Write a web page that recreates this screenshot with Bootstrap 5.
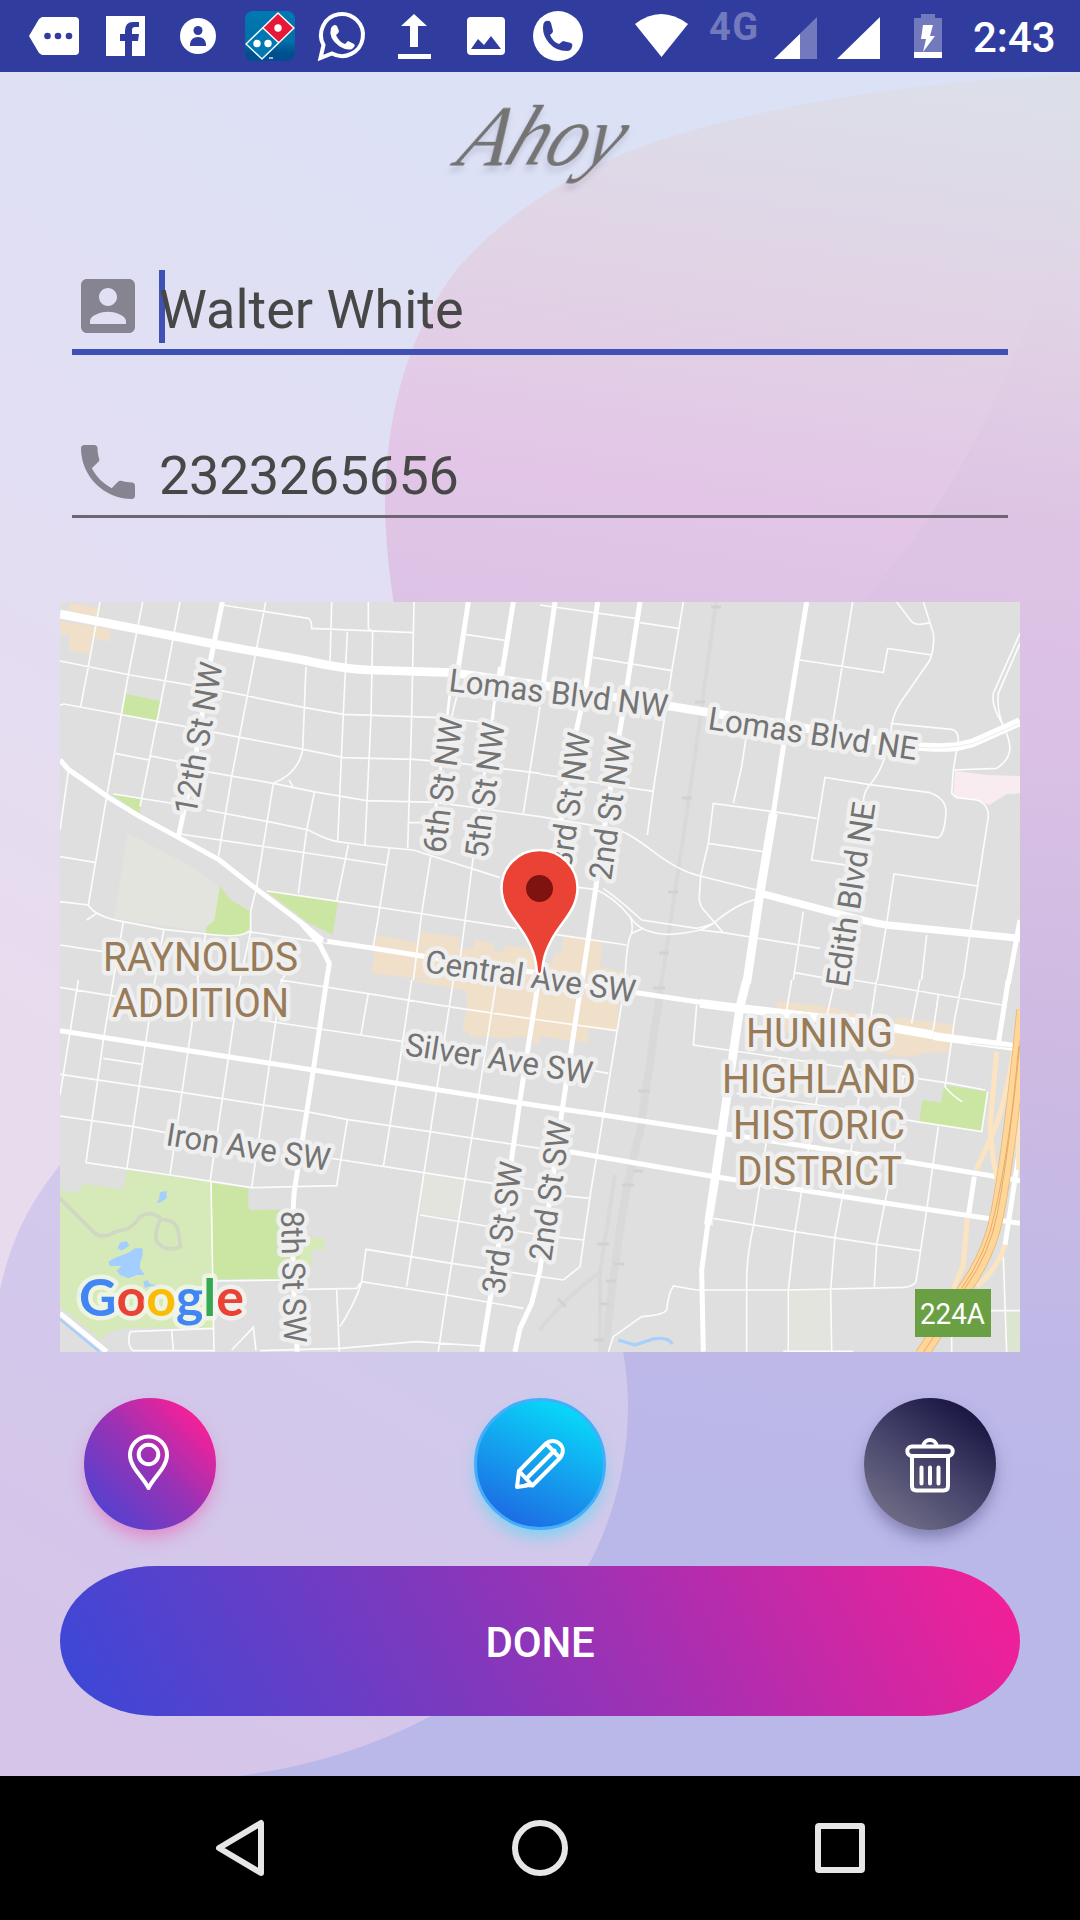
<!DOCTYPE html>
<html lang="en">
<head>
<meta charset="utf-8">
<meta name="viewport" content="width=device-width, initial-scale=1">
<title>Ahoy</title>
<link href="https://cdn.jsdelivr.net/npm/bootstrap@5.3.0/dist/css/bootstrap.min.css" rel="stylesheet">
<style>
body{font-family:Roboto,"Noto Sans",sans-serif;width:1080px;height:1920px;overflow:hidden}
svg{display:block;flex:none}
.statusbar{height:72px;background:#303d9f;padding-left:18px;color:#fff}
.wifi-icon{margin-left:41px}
.net{width:52px;margin-left:20px;font-size:38px;line-height:1;font-weight:700;letter-spacing:1.500px;color:#7279bd;padding-top:8px;white-space:nowrap}
.sim-one{margin-left:13px}
.sim-two{margin-left:19px}
.battery-icon{margin-left:33px}
.clock{margin-left:29px;font-size:42px;font-weight:500;line-height:72px;padding-top:2px;white-space:nowrap}
.screen{height:1704px}
.backdrop{z-index:0}
.content{z-index:1;padding:0 60px}
.brand{height:178px}
.brand svg{overflow:visible}
.brand text{font-family:"Liberation Serif",serif;font-style:italic;font-size:86px;fill:#747474;filter:drop-shadow(1px 6px 3px rgba(80,80,110,.2))}
.field{margin:0 12px;color:#474747;font-size:54px;line-height:73px;height:105px}
.field svg{margin-top:20px;color:#878492}
.field-name{border-bottom:6px solid #3f51b5}
.field-phone{border-bottom:3px solid #6d6672;margin-top:58px}
.field-phone svg{margin-top:23px}
.field-value{margin-left:15px;padding-top:23px;white-space:nowrap}
.field-name .field-value{position:relative}
.field-phone .field-value{padding-top:26px;letter-spacing:-.4px}
.caret{position:absolute;left:0;top:20px;width:6px;height:73px;background:#3f51b5;z-index:-1}
.mapbox{margin-top:84px;height:750px}
.actions{margin-top:46px;padding:0 24px;height:132px}
.round{width:132px;height:132px;padding:0;border:0}
.round svg{fill:none;stroke:#fff;stroke-width:4;stroke-linecap:round;stroke-linejoin:round}
.r-pin{background:linear-gradient(225deg,#fb1f96 12%,#9733b6 50%,#4b43d2 92%);box-shadow:0 9px 16px -2px rgba(240,80,170,.5)}
.r-edit{background:linear-gradient(205deg,#05e1fb 6%,#14a4ef 48%,#1e62e2 96%);border:3px solid #45adfa;box-shadow:0 9px 16px -2px rgba(70,215,245,.6)}
.r-edit svg{margin:-3px}
.r-del{background:linear-gradient(215deg,#15133f 10%,#45436a 50%,#737187 92%);box-shadow:0 9px 16px -2px rgba(70,65,120,.5)}
.done{margin-top:36px;height:150px;border-radius:96px/75px;border:0;background:linear-gradient(62deg,#3e47d6 3%,#7d39be 40%,#b22dae 67%,#d426a2 83%,#f41f97 99%);color:#fff;font-size:42px;font-weight:500;letter-spacing:-.2px;padding-top:9px}
.navkeys{height:144px;background:#000;padding-left:90px;padding-right:90px}
.navkeys svg{fill:none;stroke:#e6e6e6;stroke-width:6;stroke-linejoin:round}
.minor path{fill:none;stroke:#fff;stroke-width:5;stroke-opacity:.9}
.major path{fill:none;stroke:#fff;stroke-width:15;stroke-linejoin:round}
.streets text{font-size:32px;fill:#747474;stroke:#efefef;stroke-width:9;stroke-linejoin:round;paint-order:stroke}
.areas text{font-size:41px;fill:#987b58;stroke:#efefef;stroke-width:9;stroke-linejoin:round;paint-order:stroke}
.attribution{font-family:Lato,sans-serif;font-size:52px;paint-order:stroke;stroke:rgba(245,247,240,.75);stroke-width:9;stroke-linejoin:round}
</style>
<script src="https://cdn.jsdelivr.net/npm/bootstrap@5.3.0/dist/js/bootstrap.bundle.min.js"></script>
</head>
<body>
<header class="statusbar d-flex align-items-start">
  <svg width="72" height="72"><path d="M24 17h33q4 0 4 4v30q0 4-4 4H24l-3-2-10-17 10-17z" fill="#fff"/><g fill="#303d9f"><circle cx="29.500" cy="36" r="3.300"/><circle cx="40" cy="36" r="3.300"/><circle cx="51" cy="36" r="3.300"/></g></svg>
  <svg width="72" height="72"><path fill="#fff" d="M16 16h39v40H42V41h6l1-7h-7v-4q0-3 3-3h4v-5h-6q-8 0-8 9v3h-5v7h5v15H16z"/></svg>
  <svg width="72" height="72"><circle cx="36" cy="36" r="18" fill="#fff"/><circle cx="36" cy="30.500" r="4.500" fill="#303d9f"/><path d="M28 46v-2q1-7 8-7t8 7v2z" fill="#303d9f"/></svg>
  <svg width="72" height="72"><defs><linearGradient id="dom" x2="0" y2="1"><stop stop-color="#0079b2"/><stop offset=".6" stop-color="#0070a8"/><stop offset=".85" stop-color="#004e8e"/></linearGradient></defs><rect x="11" y="11" width="50" height="50" rx="8" fill="url(#dom)"/><path d="M44 13l16 15-32 31-16-15z" fill="#0079b2"/><path d="M44 13l16 15-15 15-16-15z" fill="#e51937"/><path d="M44 13l16 15-32 31-16-15zM29 28l16 15" fill="none" stroke="#fff" stroke-width="1.400" stroke-linejoin="round"/><g fill="#fff"><circle cx="44" cy="28" r="3.700"/><circle cx="23" cy="43.500" r="3.700"/><circle cx="34" cy="43.500" r="3.700"/></g><path d="M35 58h4" stroke="#cde" stroke-width="1.500"/></svg>
  <svg width="72" height="72"><path d="M14.500 58l3-13A21 21 0 1 1 26 53.500z" fill="none" stroke="#fff" stroke-width="4"/><path d="M25 28q3-5 6-2l2 5q0 2-3 4 3 7 9 9l3-3 6 3q2 2-2 5-5 2-13-3-11-8-8-18z" fill="#fff"/></svg>
  <svg width="72" height="72"><path d="M36 14l13 12h-9v21h-8V26h-9zM20 54h33v5H20z" fill="#fff"/></svg>
  <svg width="72" height="72"><rect x="17" y="17" width="38" height="38" rx="4" fill="#fff"/><path d="M21 49l7-10 6 6 7-9 10 13z" fill="#303d9f"/></svg>
  <svg width="72" height="72"><circle cx="36" cy="36" r="25" fill="#fff"/><path d="M24 21q4-1 5 2l2 8q0 2-3 4 3 7 9 9l4-3 8 2q2 1 1 4-1 4-5 4-11 0-18-8-6-7-6-15 0-6 3-7z" fill="#303d9f"/></svg>
  <svg class="wifi-icon" width="54" height="72"><path d="M0 24q26-20 53 0L26.500 57z" fill="#fff"/></svg>
  <div class="net">4G</div>
  <svg class="sim-one" width="44" height="72"><path d="M0 59L43 17v42z" fill="#7279bd"/><path d="M0 59l26-25v25z" fill="#fff"/></svg>
  <svg class="sim-two" width="44" height="72"><path d="M0 59L43 17v42z" fill="#fff"/></svg>
  <svg class="battery-icon" width="30" height="72"><path d="M0 18h7v-4h14v4h7v40H0z" fill="#7279bd"/><path d="M0 52h28v6H0zM9 25h10l-3 11h5L9 52l3-13H7z" fill="#fff"/></svg>
  <div class="clock">2:43</div>
</header>

<main class="screen position-relative overflow-hidden">
  <svg class="backdrop position-absolute top-0 start-0" width="1080" height="1704" viewBox="0 72 1080 1704">
    <defs>
      <linearGradient id="base" x1=".6" y1="0" x2=".32" y2=".72"><stop stop-color="#dbe2f6"/><stop offset=".3" stop-color="#dfe0f4"/><stop offset=".45" stop-color="#e1dff4"/><stop offset="1" stop-color="#e9dbee"/></linearGradient>
      <linearGradient id="pink" gradientUnits="userSpaceOnUse" x1="950" y1="75" x2="750" y2="1500"><stop stop-color="#dcdfea"/><stop offset=".17" stop-color="#e1d3e5"/><stop offset=".31" stop-color="#e3c6e7"/><stop offset=".65" stop-color="#cebae2"/><stop offset=".9" stop-color="#bdb8e8"/><stop offset="1" stop-color="#bab8e9"/></linearGradient>
      <linearGradient id="veil" gradientUnits="userSpaceOnUse" x1="1080" y1="250" x2="1000" y2="800"><stop stop-color="#dfd0e4" stop-opacity="0"/><stop offset=".5" stop-color="#d9c2e2" stop-opacity=".6"/><stop offset="1" stop-color="#d6b9e2" stop-opacity="0"/></linearGradient>
      <linearGradient id="low" gradientUnits="userSpaceOnUse" x1="450" y1="1250" x2="150" y2="1776"><stop stop-color="#d0caec"/><stop offset="1" stop-color="#d6c5e9"/></linearGradient>
    </defs>
    <rect y="72" width="1080" height="1704" fill="url(#base)"/>
    <path d="M1080 75C930 78 760 105 640 147C560 178 500 220 458 268C410 330 385 410 385 510C388 620 420 730 460 900L300 1300L200 1776H1080Z" fill="url(#pink)"/>
    <path d="M1080 180C1010 380 960 500 860 602L700 900H1080Z" fill="url(#veil)"/>
    <path d="M0 1290C12 1235 32 1200 60 1165C150 1050 450 1050 590 1260C618 1310 628 1360 628 1405C628 1470 610 1525 588 1566C550 1645 500 1690 431 1716C370 1748 310 1766 240 1776H0Z" fill="url(#low)"/>
  </svg>

  <div class="content position-relative">
    <div class="brand d-flex justify-content-center">
      <svg width="400" height="170"><g transform="translate(114 93) skewX(-22)"><text textLength="160" lengthAdjust="spacingAndGlyphs">Ahoy</text></g></svg>
    </div>
    <div class="field field-name d-flex">
      <svg width="72" height="72" viewBox="0 0 24 24" fill="currentColor"><path d="M3 5v14c0 1.100.89 2 2 2h14c1.100 0 2-.9 2-2V5c0-1.100-.9-2-2-2H5c-1.110 0-2 .9-2 2zm12 4c0 1.660-1.340 3-3 3s-3-1.340-3-3 1.340-3 3-3 3 1.340 3 3zm-9 8c0-2 4-3.100 6-3.100s6 1.100 6 3.100v1H6v-1z"/></svg>
      <div class="field-value z-1"><span class="caret"></span>Walter White</div>
    </div>
    <div class="field field-phone d-flex">
      <svg width="72" height="72" viewBox="0 0 24 24" fill="currentColor"><path d="M6.620 10.790c1.440 2.830 3.760 5.140 6.590 6.590l2.200-2.200c.27-.27.67-.36 1.020-.24 1.120.37 2.330.57 3.570.57.55 0 1 .45 1 1V20c0 .55-.45 1-1 1-9.390 0-17-7.610-17-17 0-.55.45-1 1-1h3.500c.55 0 1 .45 1 1 0 1.250.2 2.450.57 3.570.11.35.03.74-.25 1.020l-2.200 2.200z"/></svg>
      <div class="field-value">2323265656</div>
    </div>

    <div class="mapbox">
    <svg width="960" height="750" viewBox="0 0 960 750">
      <rect width="960" height="750" fill="#dfdfdf"/>
      <!-- land use -->
      <g transform="translate(0 -2) scale(.33333)">
        <path fill="#f0e0ca" d="M30 8L115 25L110 48L25 35ZM0 62L150 88V125L95 112L88 162L28 150V105L0 100ZM950 1005L1075 1030L1082 995L1200 1012L1195 1045H1240L1245 1020L1300 1030V1055H1330L1335 1035L1440 1050V1310H1230L1215 1150L935 1120Z"/>
        <path fill="#e3e4dd" d="M203 700L405 805L480 860L465 1000L162 955Z"/>
        <path fill="#cbe6a3" d="M198 282L300 302L292 360L188 343ZM155 582L245 597L238 642ZM480 857L510 898L573 935V975Q560 1010 510 1008L438 1002V982L463 962ZM618 873L834 905L818 1005L740 965Z"/>
      </g>
      <g transform="translate(480 -2) scale(.33333)">
        <path fill="#f8ecf1" d="M1245 513L1345 525L1440 528V580L1400 582L1348 615L1320 603L1240 590Z"/>
        <path fill="#f0e0ca" d="M0 1090H40L45 1060H65L70 1010L188 1025L180 1100L260 1118V1140H0Z"/>
      </g>
      <g transform="translate(0 378) scale(.33333)">
        <path fill="#f0e0ca" d="M1040 0H1440V190L1420 190V165L1355 152L1350 178L1207 155L1220 90L1270 88L1260 38L1110 12Z"/>
        <path fill="#d6e9b9" d="M0 600L5 635H55L70 612L190 628L200 570L455 605L462 1045H190L135 1062L125 1080L0 980ZM735 772H792L794 810H755V857H700Z"/>
        <path fill="#cbe6a3" d="M455 610L565 625V685L572 690L720 688V898H460Z"/>
        <path fill="#e3e4dd" d="M1093 582L1215 600L1200 718L1080 702Z"/>
        <g fill="none" stroke="#d0d8c3" stroke-width="11"><path d="M0 655L90 745Q120 785 165 755L200 748Q225 735 240 710Q275 690 305 718Q350 720 355 755L362 800Q310 820 288 780Q285 755 300 720"/></g>
        <path fill="#a3ceff" d="M300 637L320 633V655L305 665L290 670L298 655ZM180 788L200 783L208 797L185 812L173 805ZM162 835L205 818L225 805H248V825L240 850V865L255 885H230L205 895L180 885L170 872L185 858L150 858L145 845ZM250 905L262 900L270 912L298 918V925L270 918L255 925ZM55 930L70 950L50 950Z"/>
        <path d="M0 1018L118 1115" stroke="#a3ceff" stroke-width="7"/>
      </g>
      <g transform="translate(480 378) scale(.33333)">
        <path fill="#f0e0ca" d="M0 0H245L228 155L148 145L142 188L0 168ZM710 62L860 80L985 108L1060 125L1075 112L1240 135L1230 218H1152L1105 232L1035 222L860 185L715 150Z"/>
        <path fill="#cbe6a3" d="M1212 315L1343 335L1325 455L1138 425L1147 360L1203 368Z"/>
        <path fill="#e3e4dd" d="M750 930H870V1112H750ZM720 240H800L790 345L720 320Z"/>
        <path fill="#dbe5d0" d="M1400 995H1440V1115H1400Z"/>
        <path d="M235 1080L285 1095L340 1077Q385 1070 397 1092" fill="none" stroke="#a9d0fb" stroke-width="10"/>
      </g>
      <!-- railway -->
      <g fill="none" stroke="#d9d9d9" stroke-width="4"><path d="M656 0Q640 120 624 230L600 390L580 530Q560 600 545 750M555 573L540 670V750M540 670Q500 700 480 728"/><path d="M600 390L580 530Q560 600 545 750" stroke-width="8"/><path stroke-width="3" stroke="#d2d2d2" d="M651 5h10M635 100h10M622 196h10M608 290h10M599 351h10M593 386h12M578 489h12M573 569h10M562 583h12M537 642h12M554 662h10M546 679h10M539 702h10M534 738h10M498 697l8 8"/></g>

      <!-- minor streets, one group for each tile -->
      <g class="minor">
      <g transform="translate(0 -2) scale(.33333)"><path d="M120 6L85 200L62 320M248 6L205 225L140 590L85 915M360 6L315 243L270 470L240 620M617 6L585 170L515 530L475 770M738 200L728 450Q715 520 640 550L590 860L572 935V995L540 1140M763 578L740 690L715 880M815 6L810 190M862 95L850 340L833 725M925 6V85L938 95L933 350L915 735M1062 6L1055 350L1043 745M688 540L700 565M25 515L0 690M865 735L830 905M988 745L960 920L940 1040M1112 770L1085 940L1060 1140M1240 770L1200 1080M1190 290L1175 350M1305 290L1300 360M1440 320L1390 640M487 15L745 55Q755 60 755 85L1062 98M0 183L210 225L450 265L730 322L850 343L1120 352L1300 370M0 315L12 312L190 345L420 388L540 412L730 448L850 473L1060 478L1200 490L1440 520M165 460L268 480L272 468L380 490M440 515L640 550L760 575L920 602L1130 607L1440 650M160 582L350 612M440 630L640 668L745 690Q800 720 833 725L930 738L1060 750L1320 833M1045 668H1100M360 702L600 738L980 795M0 770L105 787M0 905L85 915Q105 950 190 965L310 988L440 1002Q540 1015 565 995L770 1025M620 873L840 905L1090 942L1370 985M1215 103L1340 122M0 1035L130 1055M80 960L110 940M190 965L160 1140M312 985L285 1140M437 1002L412 1140M700 1090L665 1140"/></g>
      <g transform="translate(480 -2) scale(.33333)"><path d="M0 15L285 55M300 68L415 85M430 6L395 215L340 570L322 705M158 172L395 212M0 522L340 574M0 650L230 688Q270 700 340 755Q420 815 480 828L650 870M115 862L165 868Q220 890 270 950Q300 1000 380 1003Q480 1000 520 970Q590 910 650 898M190 865Q240 900 305 960L470 985Q500 980 520 970M500 940L550 998L480 990M550 998L840 1045M500 940Q475 915 478 890L482 828L505 730L520 610L700 635L830 655M505 730L670 755M620 400L605 500L580 610M45 1003L260 1035M270 950Q280 970 275 1000L310 985M275 1000Q260 1020 255 1140M780 180L1030 218L1043 145L1175 165M938 6L880 360M1070 6L1115 65Q1130 80 1168 68M1150 6L1180 100Q1185 140 1170 180L1080 310Q1055 350 1052 400M1052 370L1235 388Q1255 392 1255 420L1240 510L1235 580L1250 593L1310 600Q1345 610 1345 650L1313 858L1290 1000L1270 1140M1240 510L1370 505Q1410 480 1410 440Q1405 400 1375 350Q1355 310 1360 280L1440 100M1440 130L1375 280Q1370 330 1390 380M1035 470Q1020 520 985 560Q970 580 970 610M985 553L855 532L815 780L930 797M985 553L1170 578Q1220 595 1218 640Q1212 715 1190 713L1000 685M1313 858L1062 822L1040 970L1012 1140M790 935L760 1140M1160 1005L1145 1140M765 1118L860 1135"/></g>
      <g transform="translate(0 378) scale(.33333)"><path d="M0 22L170 50M660 0L920 40L1180 82L1440 120M600 120L900 165L1030 185M0 283L370 338L740 395L860 418L1110 455L1440 505M130 235L248 253M0 408L220 440L330 460M750 525L1090 578L1440 632M78 548L330 585L575 623L830 617L862 420M1080 705L1440 765M905 905L918 808L1175 850L1440 890M740 928L890 925L905 905L1160 945L1390 985M905 905Q890 960 840 1040M830 930L838 1115M465 903L680 900M453 605L462 1115M210 1055L460 1045M210 1055Q200 1100 220 1112H460M335 1050L340 1112M515 1110L580 1042L588 1112M600 1112L840 1105L1070 1085L1265 1098M55 0L0 345M160 0L130 180L78 548M285 0L200 570M415 0L330 585M540 0L450 605M665 0L575 623M925 40L903 165M1055 0L1010 310L970 560M1180 0L1130 330L1040 920M1310 0L1255 350L1160 945L1135 1115"/></g>
      <g transform="translate(480 378) scale(.33333)"><path d="M470 75L460 195L770 240L1230 310L1335 330M590 340L900 385L1130 425L1325 455L1343 335M520 715L765 755L1010 793L1140 812M720 230L680 480L640 740Q620 830 620 900V1115M850 240L810 480L765 755L745 930V1115M970 260L935 500L885 770L872 930L875 1115M1090 290L1060 540L1010 793L1003 920M1195 440L1160 690L1128 905Q1120 920 1090 922L745 930L470 930L400 918Q385 940 380 990Q370 1005 305 1010L220 1070L205 1115M755 0L740 90M885 0L860 110M1010 0L990 130M1140 0L1115 130M1195 45L1180 150M1268 0L1245 110L1215 320Q1240 350 1267 365M940 0L1385 75M0 120L230 152M245 70L150 650L120 860L70 900L0 890M0 640L150 655M40 770L130 780M150 270L205 280M1390 830L1400 1115M1353 992H1440M1235 1070V1115M730 1114H940"/></g>
      </g>

      <!-- main roads -->
      <g class="major">
      <g transform="translate(0 -2) scale(.33333)"><path style="stroke-width:26" d="M0 42L450 130L730 180Q850 208 930 210L1180 218L1440 255L1840 320L2180 375L2440 420Q2600 450 2690 440L2740 428L2880 365"/><path d="M2560 440Q2650 452 2740 430L2880 370" style="stroke:#e3e3e3;stroke-width:2"/><path d="M487 6L450 190L405 480L355 710M0 480L25 508L150 595L240 650L355 712L475 778L590 868L720 965L790 1022L940 1045L1100 1070L1440 1120M1225 6L1193 215M1360 6L1325 225M1485 6L1450 250M1613 6L1578 260L1525 500L1470 900L1431 1170M1740 6L1690 330L1645 600L1605 880L1565 1150M720 965L780 1035L808 1090L800 1140"/><path style="stroke-width:8" d="M1180 200L1110 760M1318 200L1238 770"/><circle cx="796" cy="1022" r="7" fill="#dfdfdf"/></g>
      <g transform="translate(480 -2) scale(.33333)"><path d="M800 6L740 375L700 640"/><path style="stroke-width:26" d="M700 640L690 700L660 880L620 1150"/><path style="stroke-width:22" d="M670 882L890 940Q980 965 1040 975L1440 1015"/><path d="M1440 960L1405 1150"/></g>
      <g transform="translate(0 378) scale(.33333)"><path d="M800 0L760 270L705 620Q695 680 700 900L712 1115M1431 30L1380 360L1340 640L1290 960L1265 1115M0 152L760 270L1440 378M0 1000L140 1115"/></g>
      <g transform="translate(480 378) scale(.33333)"><path d="M0 0L290 38L600 85M0 378L190 405L545 460L1100 545L1440 602M90 515L525 590L1040 670L1440 730M1303 590L1285 710M1440 500L1395 795M1405 0L1375 190M125 0L65 400L0 870L-25 970L-60 1045L-75 1115M505 720L485 870L490 1115"/><path style="stroke-width:26" d="M480 70L600 85L980 130L1180 165M620 0L600 80L545 460L505 735"/><path style="stroke-width:24" d="M1180 168L1430 202"/><path style="stroke:#dedede;stroke-width:2" d="M540 600L515 735M1290 190L1425 204"/></g>
      </g>
      <!-- freeway -->
      <g transform="translate(480 378) scale(.33333)" fill="none">
        <path stroke="#fce4c1" stroke-width="15" d="M1370 215L1350 440L1360 540L1380 640M1420 215Q1400 360 1355 470L1308 570M1282 715L1270 855L1235 940M1395 795Q1370 870 1310 920M1436 300V570"/>
        <path stroke="#e7b77a" stroke-width="42" d="M1450 90Q1410 500 1372 700Q1350 820 1275 925L1145 1125"/>
        <path stroke="#ffd598" stroke-width="37" d="M1450 90Q1410 500 1372 700Q1350 820 1275 925L1145 1125"/>
        <path stroke="#e2ad6c" stroke-width="3" d="M1450 90Q1410 500 1372 700Q1350 820 1275 925L1145 1125M1436 200Q1410 500 1364 700Q1340 820 1265 925"/>
      </g>

      <g class="streets">
        <text transform="translate(388 89) rotate(6.900)" textLength="220" lengthAdjust="spacingAndGlyphs">Lomas Blvd NW</text>
        <text transform="translate(647 127) rotate(8.500)" textLength="211" lengthAdjust="spacingAndGlyphs">Lomas Blvd NE</text>
        <text transform="translate(136 214) rotate(-80)" textLength="154" lengthAdjust="spacingAndGlyphs">12th St NW</text>
        <text transform="translate(385 252) rotate(-82.500)" textLength="136" lengthAdjust="spacingAndGlyphs">6th St NW</text>
        <text transform="translate(427 257) rotate(-82.500)" textLength="136" lengthAdjust="spacingAndGlyphs">5th St NW</text>
        <text transform="translate(511 267) rotate(-81.800)" textLength="136" lengthAdjust="spacingAndGlyphs">3rd St NW</text>
        <text transform="translate(551 279) rotate(-81.800)" textLength="144" lengthAdjust="spacingAndGlyphs">2nd St NW</text>
        <text transform="translate(788 386) rotate(-81.500)" textLength="186" lengthAdjust="spacingAndGlyphs">Edith Blvd NE</text>
        <text transform="translate(364 370) rotate(8.300)" textLength="212" lengthAdjust="spacingAndGlyphs">Central Ave SW</text>
        <text transform="translate(344 453) rotate(8.900)" textLength="189" lengthAdjust="spacingAndGlyphs">Silver Ave SW</text>
        <text transform="translate(105 543) rotate(9)" textLength="165" lengthAdjust="spacingAndGlyphs">Iron Ave SW</text>
        <text transform="translate(444 693) rotate(-82)" textLength="133" lengthAdjust="spacingAndGlyphs">3rd St SW</text>
        <text transform="translate(491 660) rotate(-81.800)" textLength="141" lengthAdjust="spacingAndGlyphs">2nd St SW</text>
        <text transform="translate(221 609) rotate(88.700)" textLength="132" lengthAdjust="spacingAndGlyphs">8th St SW</text>
      </g>
      <g class="areas">
        <text x="43" y="369" textLength="195" lengthAdjust="spacingAndGlyphs">RAYNOLDS</text>
        <text x="52" y="415" textLength="177" lengthAdjust="spacingAndGlyphs">ADDITION</text>
        <text x="686" y="445" textLength="147" lengthAdjust="spacingAndGlyphs">HUNING</text>
        <text x="662" y="491" textLength="194" lengthAdjust="spacingAndGlyphs">HIGHLAND</text>
        <text x="673" y="537" textLength="172" lengthAdjust="spacingAndGlyphs">HISTORIC</text>
        <text x="677" y="583" textLength="165" lengthAdjust="spacingAndGlyphs">DISTRICT</text>
      </g>
      <rect x="855" y="687" width="76" height="48" fill="#6b9f43"/>
      <text x="860" y="722" font-size="30" fill="#fff" textLength="65" lengthAdjust="spacingAndGlyphs">224A</text>
      <text class="attribution" x="19" y="714" font-weight="700" textLength="165" lengthAdjust="spacingAndGlyphs"><tspan fill="#4285f4">G</tspan><tspan fill="#ea4335">o</tspan><tspan fill="#fbbc05">o</tspan><tspan fill="#4285f4">g</tspan><tspan fill="#34a853">l</tspan><tspan fill="#ea4335">e</tspan></text>
      <path d="M479.500 248A38 38 0 0 0 441.500 286.500C442 308 457 319 467 337C474 350 476 358 477 370Q479.500 375 482 370C483 358 485 350 492 337C502 319 517 308 517.500 286.500A38 38 0 0 0 479.500 248Z" fill="#ea4335" stroke="#fff" stroke-width="2.500"/>
      <circle cx="479.500" cy="286.500" r="13.500" fill="#7f1310"/>
    </svg>
    </div>

    <div class="actions d-flex justify-content-between">
      <button class="btn round r-pin rounded-circle" aria-label="Locate"><svg width="132" height="132"><path d="M64.500 90C59 79 46 69 46 57a18.500 18.500 0 0 1 37 0C83 69 70 79 64.500 90z"/><circle cx="64.500" cy="56.500" r="9.800"/></svg></button>
      <button class="btn round r-edit rounded-circle" aria-label="Edit"><svg width="132" height="132"><path d="M45 73L72 45.500C80 38 95 48 86 60L58.500 87.500L45 73L43 89L53 87.500M72 45.500L86 60M53 80L80.500 52.500M52 87L58.500 87.500"/></svg></button>
      <button class="btn round r-del rounded-circle" aria-label="Delete"><svg width="132" height="132"><rect x="43.300" y="48.500" width="45.400" height="9.500" rx="4.700"/><path d="M59.500 48C60 40 72 40 72.500 48M48 59v29q0 4.500 4.500 4.500h27q4.500 0 4.500-4.500V59M57.500 69.500v16M66 69.500v16M74.500 69.500v16"/></svg></button>
    </div>
    <button class="btn done w-100 d-flex align-items-center justify-content-center">DONE</button>
  </div>
</main>

<nav class="navkeys d-flex justify-content-around align-items-center">
  <svg width="60" height="60"><path d="M9 30L51 5v50z"/></svg>
  <svg width="60" height="60"><circle cx="30" cy="30" r="25"/></svg>
  <svg width="60" height="60"><rect x="8" y="8" width="44" height="44" rx="1"/></svg>
</nav>
</body>
</html>
